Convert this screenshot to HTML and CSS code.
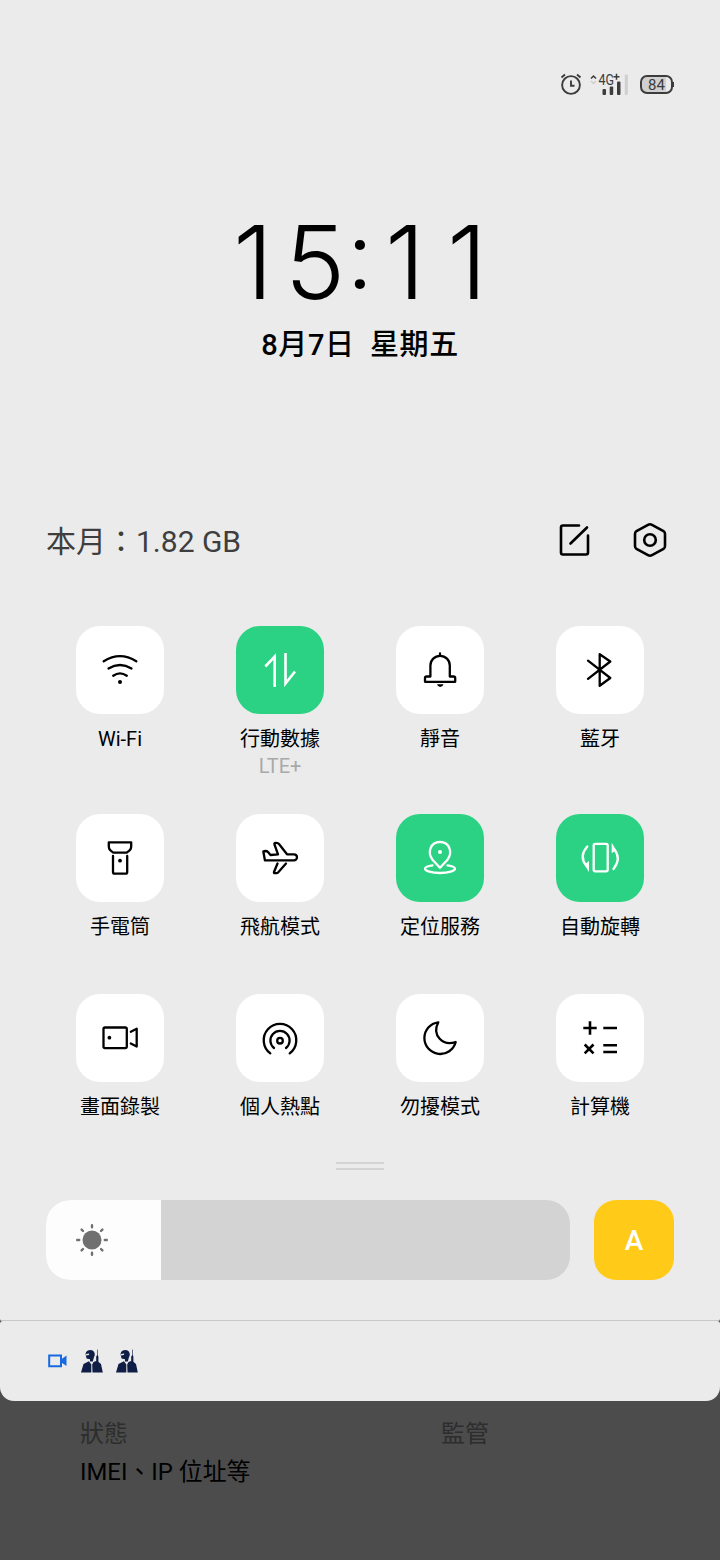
FILE: index.html
```html
<!DOCTYPE html>
<html lang="zh-Hant">
<head>
  <meta charset="UTF-8" />
  <meta name="viewport" content="width=device-width, initial-scale=1.0"/>
  <title>控制中心</title>
  <link rel="stylesheet" href="styles.css">
</head>
<body>

<main class="panel">
  <div class="status">
    <svg class="alarm" width="22" height="24" viewBox="0 0 22 24">
      <circle cx="11" cy="13" r="8.9"/>
      <path d="M11 8.500v5.300h3.500M1.500 5.500 5 2.500M20.500 5.500 17 2.500"/>
    </svg>
    <svg class="signal" width="40" height="26" viewBox="0 0 40 26">
      <path class="line" d="M1 6.500 3.500 4 6 6.500"/>
      <path class="line faint" d="M1 9 3.500 11.500 6 9"/>
      <text x="8.500" y="12.500" textLength="15.500" lengthAdjust="spacingAndGlyphs">4G</text>
      <path class="line" d="M26.500 1.800v6M23.500 4.800h6"/>
      <rect x="12.500" y="17" width="3.500" height="6" rx="1"/>
      <rect x="19.700" y="14.500" width="3.500" height="8.500" rx="1"/>
      <rect x="27" y="9.500" width="3.500" height="13.500" rx="1"/>
      <rect class="faint" x="34.800" y="2.500" width="3" height="20.500" rx="1"/>
    </svg>
    <div class="battery">84</div>
  </div>

  <div class="time"><span>1</span><span>5</span><span class="colon">:</span><span>1</span><span>1</span></div>
  <div class="date">8月7日&ensp;星期五</div>

  <div class="usage">
    <span class="usage-text">本月：1.82 GB</span>
    <svg class="tool" width="36" height="36" viewBox="0 0 36 36">
      <path d="M23 3.500H7Q5 3.500 5 5.500V30.500Q5 32.500 7 32.500H30Q32 32.500 32 30.500V13.500M14.500 21.500 31 5.500"/>
    </svg>
    <svg class="tool" width="36" height="36" viewBox="0 0 36 36">
      <path d="M16 2.800Q18 1.700 20 2.800L31.500 9Q33 10 33 12V24Q33 26 31.500 27L20 33.200Q18 34.300 16 33.200L4.500 27Q3 26 3 24V12Q3 10 4.500 9Z"/>
      <circle cx="18" cy="18" r="5.800"/>
    </svg>
  </div>

  <div class="tiles">
    <div class="tile">
      <svg class="icon" viewBox="0 0 88 88">
        <path d="M27.700 35.300Q44 25 60.300 35.300M32.500 42.500Q44 35.500 55.500 42.500M37.200 49.700Q44 45 50.800 49.700"/>
        <circle class="dot" cx="44" cy="56" r="2"/>
      </svg>
      <span class="name">Wi-Fi</span>
    </div>
    <div class="tile on">
      <svg class="icon data" viewBox="0 0 88 88">
        <path d="M29.300 40.500 38.700 30.500V61M49.500 27V57.500L59 45.500"/>
      </svg>
      <span class="name">行動數據</span>
      <span class="sub">LTE+</span>
    </div>
    <div class="tile">
      <svg class="icon" viewBox="0 0 88 88">
        <path d="M34.400 50.500V39.500a9.700 9.700 0 0 1 19.400 0V50.500H57.500Q59.200 50.500 59.200 52V55.800H29V52Q29 50.500 30.700 50.500ZM44 27.500V29"/>
        <path class="dot" d="M41 58.200h6.500q-.8 2.900-3.250 2.900T41 58.200Z"/>
      </svg>
      <span class="name">靜音</span>
    </div>
    <div class="tile">
      <svg class="icon" viewBox="0 0 88 88">
        <path d="M32 34.700 54.300 52 43.700 59.800V28.200L54.300 35.500 32 52.900"/>
      </svg>
      <span class="name">藍牙</span>
    </div>

    <div class="tile">
      <svg class="icon" viewBox="0 0 88 88">
        <path d="M32.800 28.300H55.200V32.500Q55.200 36 50.500 38.700H37.500Q32.800 36 32.800 32.500ZM37 42V58Q37 59.700 38.700 59.700H49.500Q51.200 59.700 51.200 58V42"/>
        <circle class="dot" cx="44" cy="46.700" r="1.900"/>
      </svg>
      <span class="name">手電筒</span>
    </div>
    <div class="tile">
      <svg class="icon" viewBox="0 0 88 88">
        <path d="M27.300 37.300 28.900 46.300H58a3 3 0 0 0 0-6H51L43 30Q42 28.800 40.500 28.800H39.500Q38 28.800 38.500 30.500L42 40.300 34.500 41 32 38Q31 37 29.500 37ZM41.500 49.500 38 58Q37.700 59.200 38.700 59.200H40.500Q41.500 59.200 42.300 58.300L50 49.500"/>
      </svg>
      <span class="name">飛航模式</span>
    </div>
    <div class="tile on">
      <svg class="icon" viewBox="0 0 88 88">
        <path d="M44 53.800 36.500 45.700C31 38.500 34.500 28 44 28S57 38.500 51.500 45.700ZM36.500 51.400C31.500 52 29 53.300 29 54.800C29 57 35.500 59 44 59S59 57 59 54.800C59 53.300 56.500 52 51.500 51.400"/>
        <circle class="dot" cx="44" cy="37.900" r="2"/>
      </svg>
      <span class="name">定位服務</span>
    </div>
    <div class="tile on">
      <svg class="icon" viewBox="0 0 88 88">
        <rect x="37.700" y="29.800" width="14" height="27.500" rx="1.500"/>
        <path d="M31.300 32.500C25.500 39 25.500 46 30.500 52M57.500 55C63 48 63 41 58 35"/>
        <path class="dot" d="M28.500 50.500 33 47V58.200ZM55.700 28.700V39.200L60 36Z"/>
      </svg>
      <span class="name">自動旋轉</span>
    </div>

    <div class="tile">
      <svg class="icon" viewBox="0 0 88 88">
        <rect x="27.500" y="33.500" width="23.300" height="20.600" rx="1.500"/>
        <path d="M54.800 37.800 60.700 34.800V52.500L54.800 49.500"/>
        <circle class="dot" cx="33.400" cy="43.700" r="1.900"/>
      </svg>
      <span class="name">畫面錄製</span>
    </div>
    <div class="tile">
      <svg class="icon" viewBox="0 0 88 88">
        <path d="M34.300 59.300a16.300 16.300 0 1 1 19.400 0M38 54a9.600 9.600 0 1 1 12 0"/>
        <circle cx="44" cy="46.700" r="2.800"/>
      </svg>
      <span class="name">個人熱點</span>
    </div>
    <div class="tile">
      <svg class="icon" viewBox="0 0 88 88">
        <path d="M42.300 28.300A15.900 15.900 0 1 0 59.700 48C47 52.500 35.500 41.500 42.300 28.300Z"/>
      </svg>
      <span class="name">勿擾模式</span>
    </div>
    <div class="tile">
      <svg class="icon calc" viewBox="0 0 88 88">
        <path d="M34 27.300V40.700M27.300 34H40.700M47.300 34H61M28.700 50.500 37.500 59.300M37.500 50.500 28.700 59.300M47.300 51.300H61M47.300 58H61"/>
      </svg>
      <span class="name">計算機</span>
    </div>
  </div>

  <div class="handle"></div>

  <div class="brightness">
    <div class="slider">
      <div class="level" style="width: 22%">
        <svg class="sun" width="32" height="32" viewBox="0 0 32 32">
          <circle cx="16" cy="16" r="9.500"/>
          <path d="M16 1.200v2M16 28.800v2M1.200 16h2M28.800 16h2M5.600 5.600l1.400 1.400M25 25l1.400 1.400M5.600 26.400 7 25M25 7l1.400-1.400"/>
        </svg>
      </div>
    </div>
    <div class="auto">A</div>
  </div>
</main>

<div class="notices">
  <svg class="cam" width="19" height="14" viewBox="0 0 19 14">
    <path class="frame" d="M1.200 1.500H13V12.200H1.200Z"/>
    <path class="lens" d="M13 5.500 18.500 1.500V12L13 8.200Z"/>
  </svg>
  <svg class="soldier" width="22" height="24" viewBox="0 0 22 24">
    <path d="M4.500 5Q5 1 9.800 1Q13.800 1.500 13.800 6L12.800 8.700 11.800 12.500H9V10.300L5.500 9.500Z"/>
    <path d="M16.300 1 16.900.3V6L17.400 8V12.800L20 15 21.800 23.500H11.500L11.200 15.500 12.500 13 15.200 12V7.500L16.300 6Z"/>
    <path d="M0 23.500 2.500 15 8 12.300 10.300 15.500V23.500Z"/>
    <path class="visor" d="M4.800 5 8.200 4.500 8 6 4.800 6.500Z"/>
  </svg>
  <svg class="soldier" width="22" height="24" viewBox="0 0 22 24">
    <path d="M4.500 5Q5 1 9.800 1Q13.800 1.500 13.800 6L12.800 8.700 11.800 12.500H9V10.300L5.500 9.500Z"/>
    <path d="M16.300 1 16.900.3V6L17.400 8V12.800L20 15 21.800 23.500H11.500L11.200 15.500 12.500 13 15.200 12V7.500L16.300 6Z"/>
    <path d="M0 23.500 2.500 15 8 12.300 10.300 15.500V23.500Z"/>
    <path class="visor" d="M4.800 5 8.200 4.500 8 6 4.800 6.500Z"/>
  </svg>
</div>

<!-- dimmed settings page under the shade -->
<div class="behind">
  <div>
    <p class="label">狀態</p>
    <p class="value">IMEI、IP 位址等</p>
  </div>
  <div>
    <p class="label">監管</p>
  </div>
</div>

</body>
</html>
```
FILE: styles.css
```css
* {
  box-sizing: border-box;
}
body {
  font-family: Roboto, "Noto Sans CJK TC", sans-serif;
  background: #4c4c4c;
  color: #000;
  margin: 0;
  height: 1560px;
  overflow: hidden;
}
svg {
  display: block;
  flex: none;
}
.panel {
  height: 1321px;
  background: #ebebeb;
  border-bottom: 1px solid #c9c9c9;
  border-radius: 0 0 2px 2px;
}

/* status bar */
.status {
  height: 98px;
  padding: 72px 47px 0 0;
  display: flex;
  justify-content: flex-end;
}
.alarm {
  margin-right: 8px;
  fill: none;
  stroke: #3c3c3c;
  stroke-width: 1.9;
}
.signal {
  margin-right: 10px;
  fill: #3c3c3c;
}
.signal text {
  font-size: 14px;
}
.signal .line {
  fill: none;
  stroke: #3c3c3c;
  stroke-width: 1.5;
}
.signal .faint {
  fill: #cfcfcf;
}
.signal .line.faint {
  fill: none;
  stroke: #cfcfcf;
}
.battery {
  position: relative;
  width: 33px;
  height: 19px;
  margin-top: 3px;
  border: 2px solid #3c3c3c;
  border-radius: 7px;
  background: linear-gradient(90deg, #d0d0d0 84%, #ebebeb 84%);
  color: #3c3c3c;
  font-size: 15px;
  line-height: 16px;
  text-align: center;
}
.battery::after {
  content: "";
  position: absolute;
  right: -3px;
  top: 5px;
  width: 2px;
  height: 5px;
  background: #3c3c3c;
}

/* clock */
.time {
  display: flex;
  justify-content: center;
  margin-top: 114px;
  height: 100px;
  font-family: Inter, sans-serif;
  font-size: 102px;
  font-weight: 300;
  line-height: 100px;
}
.time span {
  width: 62px;
  text-align: center;
}
.time .colon {
  width: 28px;
  font-family: Roboto, sans-serif;
  font-size: 90px;
  font-weight: 400;
  line-height: 92px;
}
.date {
  margin-top: 12px;
  height: 42px;
  font-size: 29px;
  font-weight: 500;
  letter-spacing: 0.6px;
  line-height: 43px;
  text-align: center;
}

.usage {
  display: flex;
  align-items: center;
  height: 48px;
  margin-top: 150px;
  padding: 0 52px 0 46px;
}
.usage-text {
  flex: 1;
  margin-top: -3px;
  color: #3e3e3e;
  font-size: 30px;
}
.tool {
  margin-left: 40px;
  fill: none;
  stroke: #000;
  stroke-width: 2.6;
  stroke-linecap: round;
}

/* toggles */
.tiles {
  display: grid;
  grid-template-columns: repeat(4, 160px);
  grid-template-rows: 188px 180px 150px;
  padding: 0 40px;
  margin-top: 62px;
}
.tile {
  display: flex;
  flex-direction: column;
  align-items: center;
}
.icon {
  width: 88px;
  height: 88px;
  border-radius: 24px;
  background: #fff;
  color: #000;
  fill: none;
  stroke: currentColor;
  stroke-width: 2.3;
  stroke-linecap: round;
  stroke-linejoin: round;
}
.on .icon {
  background: #2bd283;
  color: #fff;
}
.icon .dot {
  fill: currentColor;
  stroke: none;
}
.icon.data {
  stroke-width: 2.6;
  stroke-linecap: butt;
  stroke-linejoin: miter;
}
.icon.calc {
  stroke-width: 2.6;
  stroke-linecap: butt;
}
.name {
  margin-top: 11px;
  font-size: 20px;
  line-height: 28px;
}
.sub {
  margin-top: -1px;
  color: #a9a9a9;
  font-size: 20px;
  line-height: 28px;
}

.handle {
  width: 48px;
  height: 8px;
  margin: 18px auto 0;
  border-top: 2px solid #d3d3d3;
  border-bottom: 2px solid #d3d3d3;
}

.brightness {
  display: flex;
  gap: 24px;
  margin-top: 30px;
  padding: 0 46px;
}
.slider {
  flex: 1;
  height: 80px;
  border-radius: 24px;
  background: #d3d3d3;
  overflow: hidden;
}
.level {
  display: flex;
  align-items: center;
  height: 80px;
  padding-left: 30px;
  background: #fdfdfd;
}
.sun {
  fill: #707070;
  stroke: #707070;
  stroke-width: 2.4;
  stroke-linecap: round;
}
.sun circle {
  stroke: none;
}
.auto {
  width: 80px;
  height: 80px;
  border-radius: 22px;
  background: #ffcb18;
  color: #fff;
  font-size: 28px;
  font-weight: 500;
  line-height: 81px;
  text-align: center;
}

.notices {
  display: flex;
  align-items: center;
  height: 80px;
  padding-left: 48px;
  border-radius: 3px 3px 14px 14px;
  background: #ebebeb;
}
.cam {
  margin-right: 14px;
}
.cam .frame {
  fill: none;
  stroke: #1769e0;
  stroke-width: 2;
}
.cam .lens {
  fill: #1769e0;
}
.soldier {
  margin-right: 13px;
  fill: #101d45;
}
.soldier .visor {
  fill: #dfe2e8;
}

.behind {
  display: grid;
  grid-template-columns: 361px 1fr;
  padding: 14px 0 0 80px;
}
.behind p {
  margin: 0;
  font-size: 23.9px;
  line-height: 38px;
}
.behind .label {
  color: #2d2d2d;
}
```
